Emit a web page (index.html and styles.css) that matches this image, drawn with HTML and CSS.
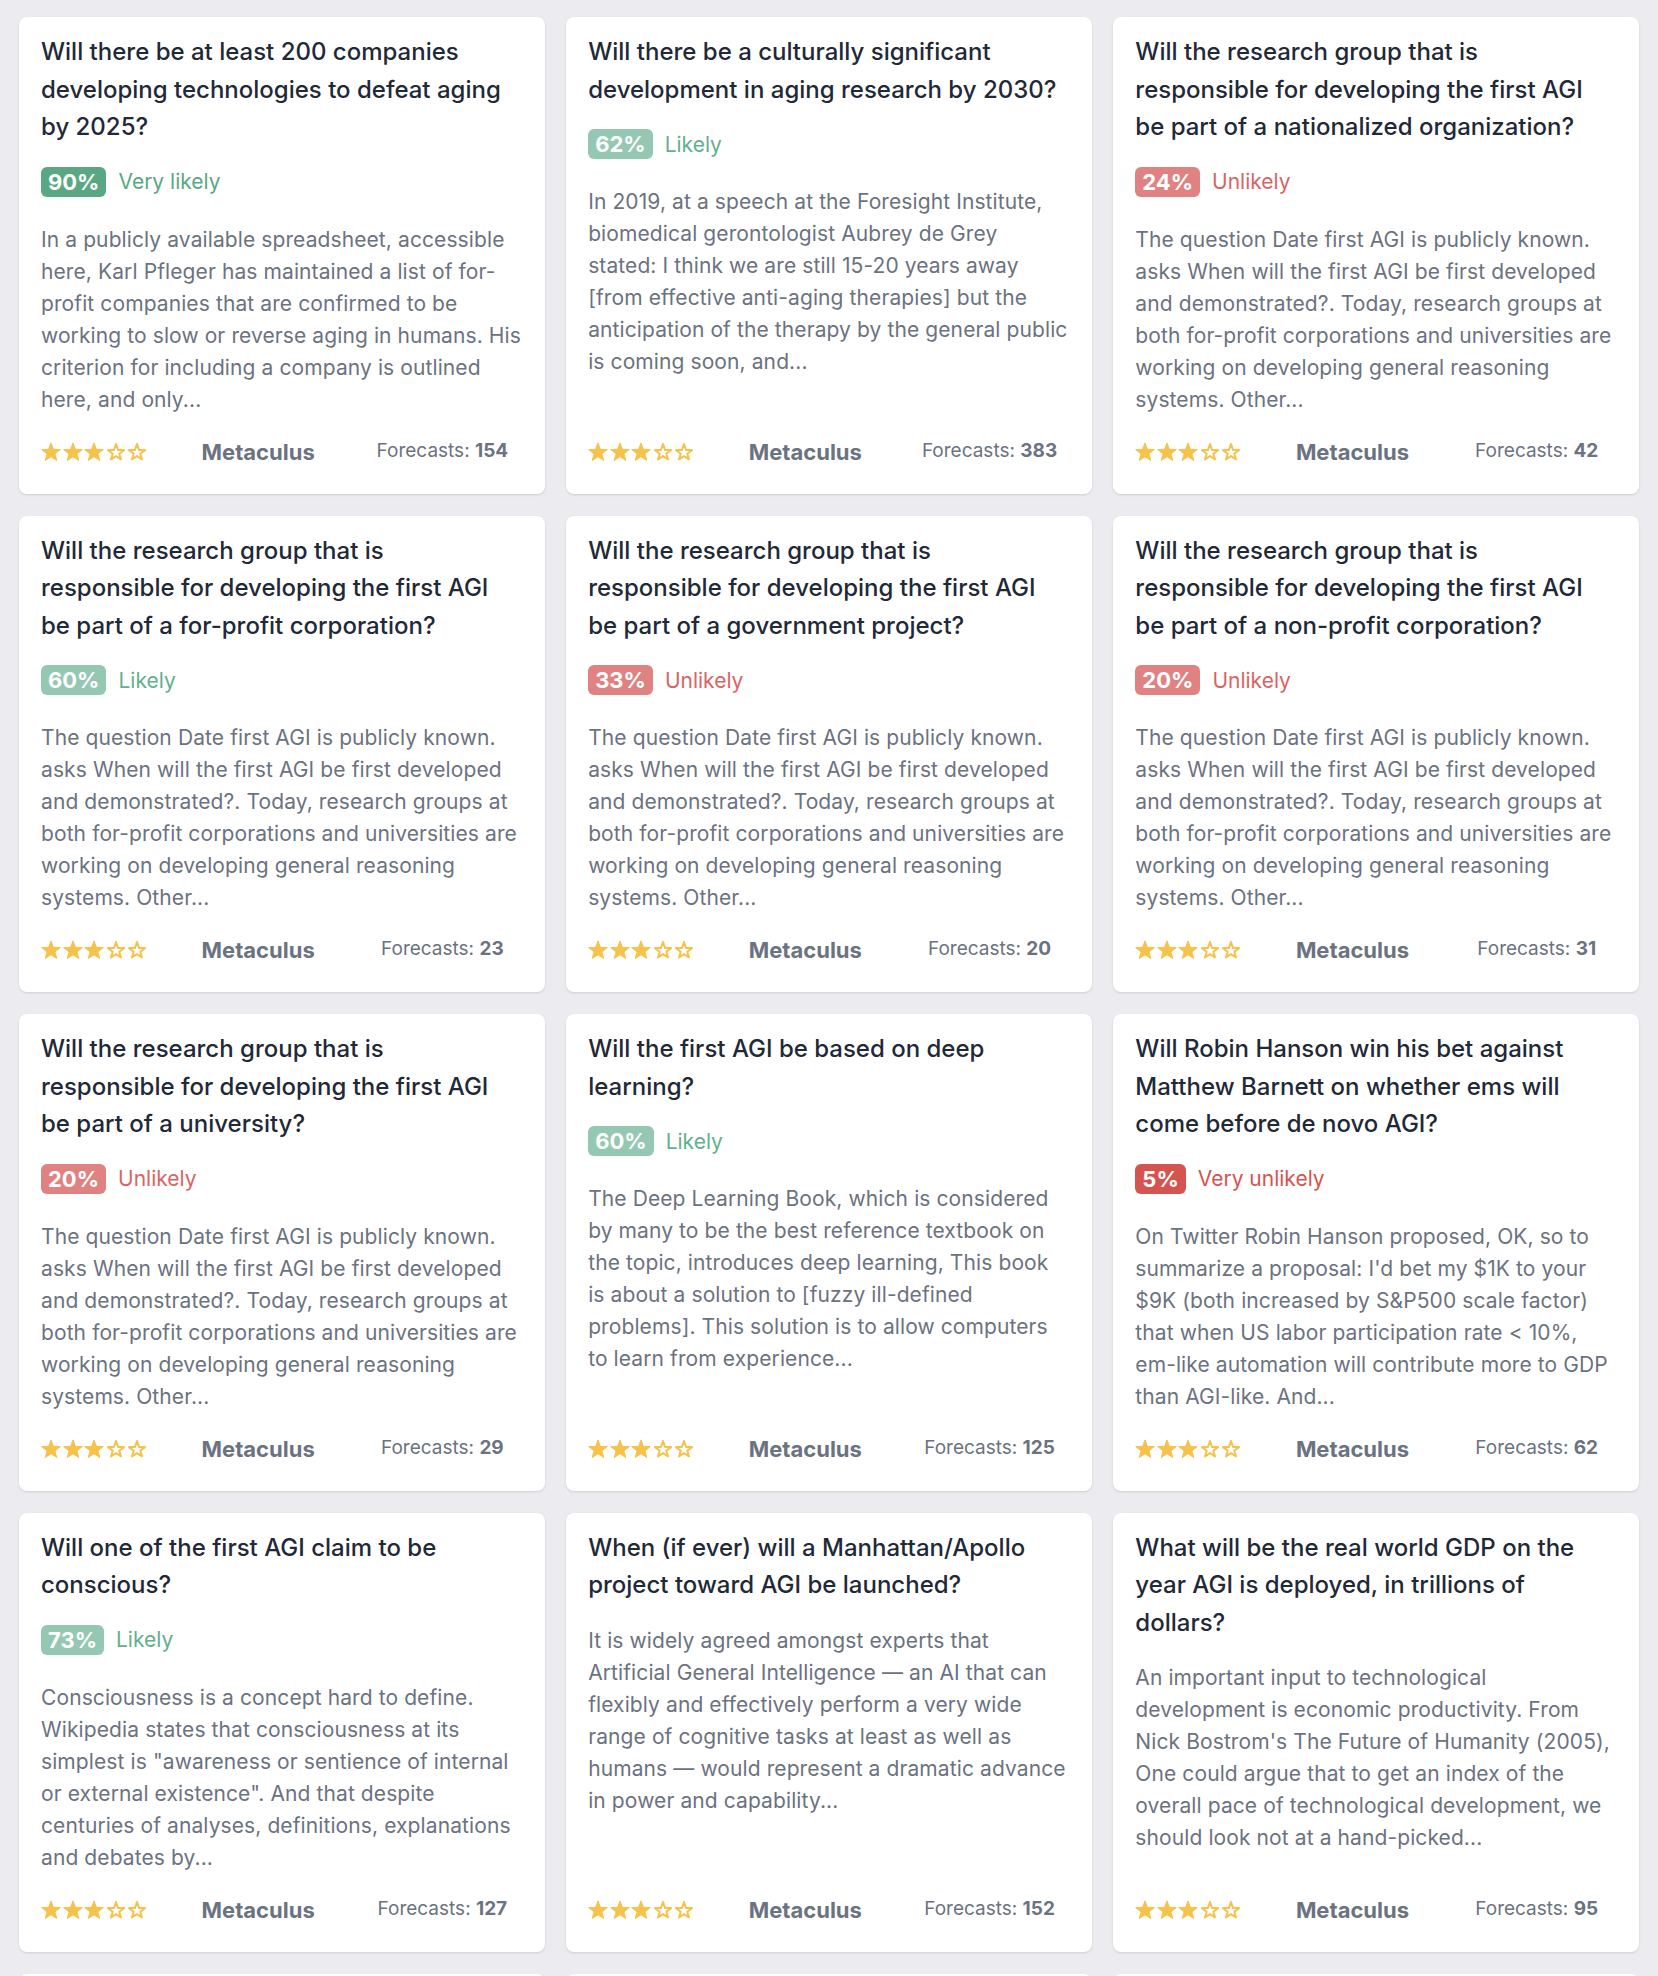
FILE: index.html
```html
<!DOCTYPE html>
<html lang="en">
<head>
    <meta charset="UTF-8">
    <meta name="viewport" content="width=device-width, initial-scale=1.0">
    <title>Forecasts - AGI and Aging</title>
    <link rel="stylesheet" href="styles.css">
</head>
<body>
    <!-- star shapes, reused by every rating below -->
    <svg class="sprite" xmlns="http://www.w3.org/2000/svg">
        <symbol id="star-full" viewBox="0 0 20 20">
            <path d="M10 .9L12.4 7.3 19.3 7.6 13.9 11.9 15.8 18.5 10 14.7 4.2 18.5 6.1 11.9.7 7.6 7.6 7.3Z" fill="currentColor" stroke="currentColor" stroke-width="1" stroke-linejoin="round"/>
        </symbol>
        <symbol id="star-empty" viewBox="0 0 20 20">
            <path d="M10 2L12 7.9 18 8.1 13.3 11.8 15 17.4 10 14.2 5 17.4 6.7 11.8 2 8.1 8 7.9Z" fill="#fff" stroke="currentColor" stroke-width="2" stroke-linejoin="round"/>
        </symbol>
    </svg>

    <main class="question-grid">

        <article class="card">
            <h3 class="card-title">Will there be at least 200 companies developing technologies to defeat aging by 2025?</h3>
            <div class="prob very-likely"><span class="prob-badge">90%</span><span class="prob-label">Very likely</span></div>
            <p class="card-text">In a publicly available spreadsheet, accessible here, Karl Pfleger has maintained a list of for-profit companies that are confirmed to be working to slow or reverse aging in humans. His criterion for including a company is outlined here, and only...</p>
            <div class="card-footer">
                <div class="stars"><svg><use href="#star-full"/></svg><svg><use href="#star-full"/></svg><svg><use href="#star-full"/></svg><svg><use href="#star-empty"/></svg><svg><use href="#star-empty"/></svg></div>
                <span class="platform">Metaculus</span>
                <span class="forecasts">Forecasts: <b>154</b></span>
            </div>
        </article>

        <article class="card">
            <h3 class="card-title">Will there be a culturally significant development in aging research by 2030?</h3>
            <div class="prob likely"><span class="prob-badge">62%</span><span class="prob-label">Likely</span></div>
            <p class="card-text">In 2019, at a speech at the Foresight Institute, biomedical gerontologist Aubrey de Grey stated: I think we are still 15-20 years away [from effective anti-aging therapies] but the anticipation of the therapy by the general public is coming soon, and...</p>
            <div class="card-footer">
                <div class="stars"><svg><use href="#star-full"/></svg><svg><use href="#star-full"/></svg><svg><use href="#star-full"/></svg><svg><use href="#star-empty"/></svg><svg><use href="#star-empty"/></svg></div>
                <span class="platform">Metaculus</span>
                <span class="forecasts">Forecasts: <b>383</b></span>
            </div>
        </article>

        <article class="card">
            <h3 class="card-title">Will the research group that is responsible for developing the first AGI be part of a nationalized organization?</h3>
            <div class="prob unlikely"><span class="prob-badge">24%</span><span class="prob-label">Unlikely</span></div>
            <p class="card-text">The question Date first AGI is publicly known. asks When will the first AGI be first developed and demonstrated?. Today, research groups at both for-profit corporations and universities are working on developing general reasoning systems. Other...</p>
            <div class="card-footer">
                <div class="stars"><svg><use href="#star-full"/></svg><svg><use href="#star-full"/></svg><svg><use href="#star-full"/></svg><svg><use href="#star-empty"/></svg><svg><use href="#star-empty"/></svg></div>
                <span class="platform">Metaculus</span>
                <span class="forecasts">Forecasts: <b>42</b></span>
            </div>
        </article>

        <article class="card">
            <h3 class="card-title">Will the research group that is responsible for developing the first AGI be part of a for-profit corporation?</h3>
            <div class="prob likely"><span class="prob-badge">60%</span><span class="prob-label">Likely</span></div>
            <p class="card-text">The question Date first AGI is publicly known. asks When will the first AGI be first developed and demonstrated?. Today, research groups at both for-profit corporations and universities are working on developing general reasoning systems. Other...</p>
            <div class="card-footer">
                <div class="stars"><svg><use href="#star-full"/></svg><svg><use href="#star-full"/></svg><svg><use href="#star-full"/></svg><svg><use href="#star-empty"/></svg><svg><use href="#star-empty"/></svg></div>
                <span class="platform">Metaculus</span>
                <span class="forecasts">Forecasts: <b>23</b></span>
            </div>
        </article>

        <article class="card">
            <h3 class="card-title">Will the research group that is responsible for developing the first AGI be part of a government project?</h3>
            <div class="prob unlikely"><span class="prob-badge">33%</span><span class="prob-label">Unlikely</span></div>
            <p class="card-text">The question Date first AGI is publicly known. asks When will the first AGI be first developed and demonstrated?. Today, research groups at both for-profit corporations and universities are working on developing general reasoning systems. Other...</p>
            <div class="card-footer">
                <div class="stars"><svg><use href="#star-full"/></svg><svg><use href="#star-full"/></svg><svg><use href="#star-full"/></svg><svg><use href="#star-empty"/></svg><svg><use href="#star-empty"/></svg></div>
                <span class="platform">Metaculus</span>
                <span class="forecasts">Forecasts: <b>20</b></span>
            </div>
        </article>

        <article class="card">
            <h3 class="card-title">Will the research group that is responsible for developing the first AGI be part of a non-profit corporation?</h3>
            <div class="prob unlikely"><span class="prob-badge">20%</span><span class="prob-label">Unlikely</span></div>
            <p class="card-text">The question Date first AGI is publicly known. asks When will the first AGI be first developed and demonstrated?. Today, research groups at both for-profit corporations and universities are working on developing general reasoning systems. Other...</p>
            <div class="card-footer">
                <div class="stars"><svg><use href="#star-full"/></svg><svg><use href="#star-full"/></svg><svg><use href="#star-full"/></svg><svg><use href="#star-empty"/></svg><svg><use href="#star-empty"/></svg></div>
                <span class="platform">Metaculus</span>
                <span class="forecasts">Forecasts: <b>31</b></span>
            </div>
        </article>

        <article class="card">
            <h3 class="card-title">Will the research group that is responsible for developing the first AGI be part of a university?</h3>
            <div class="prob unlikely"><span class="prob-badge">20%</span><span class="prob-label">Unlikely</span></div>
            <p class="card-text">The question Date first AGI is publicly known. asks When will the first AGI be first developed and demonstrated?. Today, research groups at both for-profit corporations and universities are working on developing general reasoning systems. Other...</p>
            <div class="card-footer">
                <div class="stars"><svg><use href="#star-full"/></svg><svg><use href="#star-full"/></svg><svg><use href="#star-full"/></svg><svg><use href="#star-empty"/></svg><svg><use href="#star-empty"/></svg></div>
                <span class="platform">Metaculus</span>
                <span class="forecasts">Forecasts: <b>29</b></span>
            </div>
        </article>

        <article class="card">
            <h3 class="card-title">Will the first AGI be based on deep learning?</h3>
            <div class="prob likely"><span class="prob-badge">60%</span><span class="prob-label">Likely</span></div>
            <p class="card-text">The Deep Learning Book, which is considered by many to be the best reference textbook on the topic, introduces deep learning, This book is about a solution to [fuzzy ill-defined problems]. This solution is to allow computers to learn from experience...</p>
            <div class="card-footer">
                <div class="stars"><svg><use href="#star-full"/></svg><svg><use href="#star-full"/></svg><svg><use href="#star-full"/></svg><svg><use href="#star-empty"/></svg><svg><use href="#star-empty"/></svg></div>
                <span class="platform">Metaculus</span>
                <span class="forecasts">Forecasts: <b>125</b></span>
            </div>
        </article>

        <article class="card">
            <h3 class="card-title">Will Robin Hanson win his bet against Matthew Barnett on whether ems will come before de novo AGI?</h3>
            <div class="prob very-unlikely"><span class="prob-badge">5%</span><span class="prob-label">Very unlikely</span></div>
            <p class="card-text">On Twitter Robin Hanson proposed, OK, so to summarize a proposal: I'd bet my $1K to your $9K (both increased by S&amp;P500 scale factor) that when US labor participation rate &lt; 10%, em-like automation will contribute more to GDP than AGI-like. And...</p>
            <div class="card-footer">
                <div class="stars"><svg><use href="#star-full"/></svg><svg><use href="#star-full"/></svg><svg><use href="#star-full"/></svg><svg><use href="#star-empty"/></svg><svg><use href="#star-empty"/></svg></div>
                <span class="platform">Metaculus</span>
                <span class="forecasts">Forecasts: <b>62</b></span>
            </div>
        </article>

        <article class="card">
            <h3 class="card-title">Will one of the first AGI claim to be conscious?</h3>
            <div class="prob likely"><span class="prob-badge">73%</span><span class="prob-label">Likely</span></div>
            <p class="card-text">Consciousness is a concept hard to define. Wikipedia states that consciousness at its simplest is "awareness or sentience of internal or external existence". And that despite centuries of analyses, definitions, explanations and debates by...</p>
            <div class="card-footer">
                <div class="stars"><svg><use href="#star-full"/></svg><svg><use href="#star-full"/></svg><svg><use href="#star-full"/></svg><svg><use href="#star-empty"/></svg><svg><use href="#star-empty"/></svg></div>
                <span class="platform">Metaculus</span>
                <span class="forecasts">Forecasts: <b>127</b></span>
            </div>
        </article>

        <article class="card">
            <h3 class="card-title">When (if ever) will a Manhattan/Apollo project toward AGI be launched?</h3>
            <p class="card-text">It is widely agreed amongst experts that Artificial General Intelligence — an AI that can flexibly and effectively perform a very wide range of cognitive tasks at least as well as humans — would represent a dramatic advance in power and capability...</p>
            <div class="card-footer">
                <div class="stars"><svg><use href="#star-full"/></svg><svg><use href="#star-full"/></svg><svg><use href="#star-full"/></svg><svg><use href="#star-empty"/></svg><svg><use href="#star-empty"/></svg></div>
                <span class="platform">Metaculus</span>
                <span class="forecasts">Forecasts: <b>152</b></span>
            </div>
        </article>

        <article class="card">
            <h3 class="card-title">What will be the real world GDP on the year AGI is deployed, in trillions of dollars?</h3>
            <p class="card-text">An important input to technological development is economic productivity. From Nick Bostrom's The Future of Humanity (2005), One could argue that to get an index of the overall pace of technological development, we should look not at a hand-picked...</p>
            <div class="card-footer">
                <div class="stars"><svg><use href="#star-full"/></svg><svg><use href="#star-full"/></svg><svg><use href="#star-full"/></svg><svg><use href="#star-empty"/></svg><svg><use href="#star-empty"/></svg></div>
                <span class="platform">Metaculus</span>
                <span class="forecasts">Forecasts: <b>95</b></span>
            </div>
        </article>

        <article class="card">
            <h3 class="card-title">When will the first general AI system be devised, tested, and publicly announced?</h3>
            <p class="card-text">Metaculus has several questions relating to the arrival of artificial general intelligence. This question asks when a system meeting a demanding set of criteria will be announced...</p>
            <div class="card-footer">
                <div class="stars"><svg><use href="#star-full"/></svg><svg><use href="#star-full"/></svg><svg><use href="#star-full"/></svg><svg><use href="#star-empty"/></svg><svg><use href="#star-empty"/></svg></div>
                <span class="platform">Metaculus</span>
                <span class="forecasts">Forecasts: <b>1004</b></span>
            </div>
        </article>

        <article class="card">
            <h3 class="card-title">Will the first AGI be developed in the United States?</h3>
            <div class="prob likely"><span class="prob-badge">66%</span><span class="prob-label">Likely</span></div>
            <p class="card-text">Most of the leading research groups working on general reasoning systems are currently based in the United States...</p>
            <div class="card-footer">
                <div class="stars"><svg><use href="#star-full"/></svg><svg><use href="#star-full"/></svg><svg><use href="#star-full"/></svg><svg><use href="#star-empty"/></svg><svg><use href="#star-empty"/></svg></div>
                <span class="platform">Metaculus</span>
                <span class="forecasts">Forecasts: <b>88</b></span>
            </div>
        </article>

        <article class="card">
            <h3 class="card-title">Will a human brain be emulated before 2050?</h3>
            <div class="prob unlikely"><span class="prob-badge">30%</span><span class="prob-label">Unlikely</span></div>
            <p class="card-text">Whole brain emulation would require scanning a brain at sufficient resolution and simulating it on a computer...</p>
            <div class="card-footer">
                <div class="stars"><svg><use href="#star-full"/></svg><svg><use href="#star-full"/></svg><svg><use href="#star-full"/></svg><svg><use href="#star-empty"/></svg><svg><use href="#star-empty"/></svg></div>
                <span class="platform">Metaculus</span>
                <span class="forecasts">Forecasts: <b>47</b></span>
            </div>
        </article>

    </main>
</body>
</html>
```

FILE: styles.css
```css
:root {
    --page-bg: #ebebf0;
    --card-bg: #ffffff;
    --title-color: #1f2937;
    --text-color: #6b7280;
    --star-color: #f5c24b;
    --green-strong: #5aa883;
    --green-soft: #94c8b3;
    --green-text: #62b08c;
    --red-strong: #d6544f;
    --red-soft: #e08282;
    --red-text: #d96563;
}

* {
    margin: 0;
    padding: 0;
    box-sizing: border-box;
}

body {
    font-family: Inter, "Noto Sans", "Liberation Sans", sans-serif;
    background-color: var(--page-bg);
    color: var(--text-color);
}

.sprite {
    display: none;
}

.question-grid {
    display: grid;
    grid-template-columns: repeat(3, 1fr);
    gap: 22px 21.5px;
    padding: 17px 19px;
}

.card {
    display: flex;
    flex-direction: column;
    background-color: var(--card-bg);
    border-radius: 8px;
    box-shadow: 0 1px 3px rgba(0, 0, 0, 0.08), 0 1px 2px rgba(0, 0, 0, 0.05);
    padding: 16px 22px 27px;
}

.card-title {
    font-size: 24px;
    line-height: 37.5px;
    font-weight: 500;
    color: var(--title-color);
    margin-bottom: 21px;
}

/* probability badge + wording */
.prob {
    display: flex;
    align-items: center;
    gap: 12px;
    height: 30px;
    margin-bottom: 27px;
}

.prob-badge {
    height: 30px;
    line-height: 30px;
    padding: 0 7px;
    border-radius: 6px;
    color: white;
    font-size: 22px;
    font-weight: 700;
}

.prob-label {
    font-size: 21px;
}

.very-likely .prob-badge { background-color: var(--green-strong); }
.very-likely .prob-label { color: var(--green-strong); }
.likely .prob-badge { background-color: var(--green-soft); }
.likely .prob-label { color: var(--green-text); }
.unlikely .prob-badge { background-color: var(--red-soft); }
.unlikely .prob-label { color: var(--red-text); }
.very-unlikely .prob-badge { background-color: var(--red-strong); }
.very-unlikely .prob-label { color: var(--red-strong); }

.card-text {
    font-size: 21px;
    line-height: 32px;
    letter-spacing: 0.1px;
    color: var(--text-color);
}

.card-footer {
    display: grid;
    grid-template-columns: repeat(3, 1fr);
    align-items: center;
    height: 51px;
    padding-top: 21px;
    margin-top: auto;
}

.stars {
    display: flex;
    gap: 1.5px;
    color: var(--star-color);
}

.stars svg {
    width: 20px;
    height: 20px;
    overflow: visible;
}

.platform {
    font-size: 22px;
    font-weight: 700;
    color: var(--text-color);
}

.forecasts {
    font-size: 19px;
    text-align: center;
    color: var(--text-color);
    margin-top: -3px;
}

.forecasts b {
    font-weight: 700;
}
```
